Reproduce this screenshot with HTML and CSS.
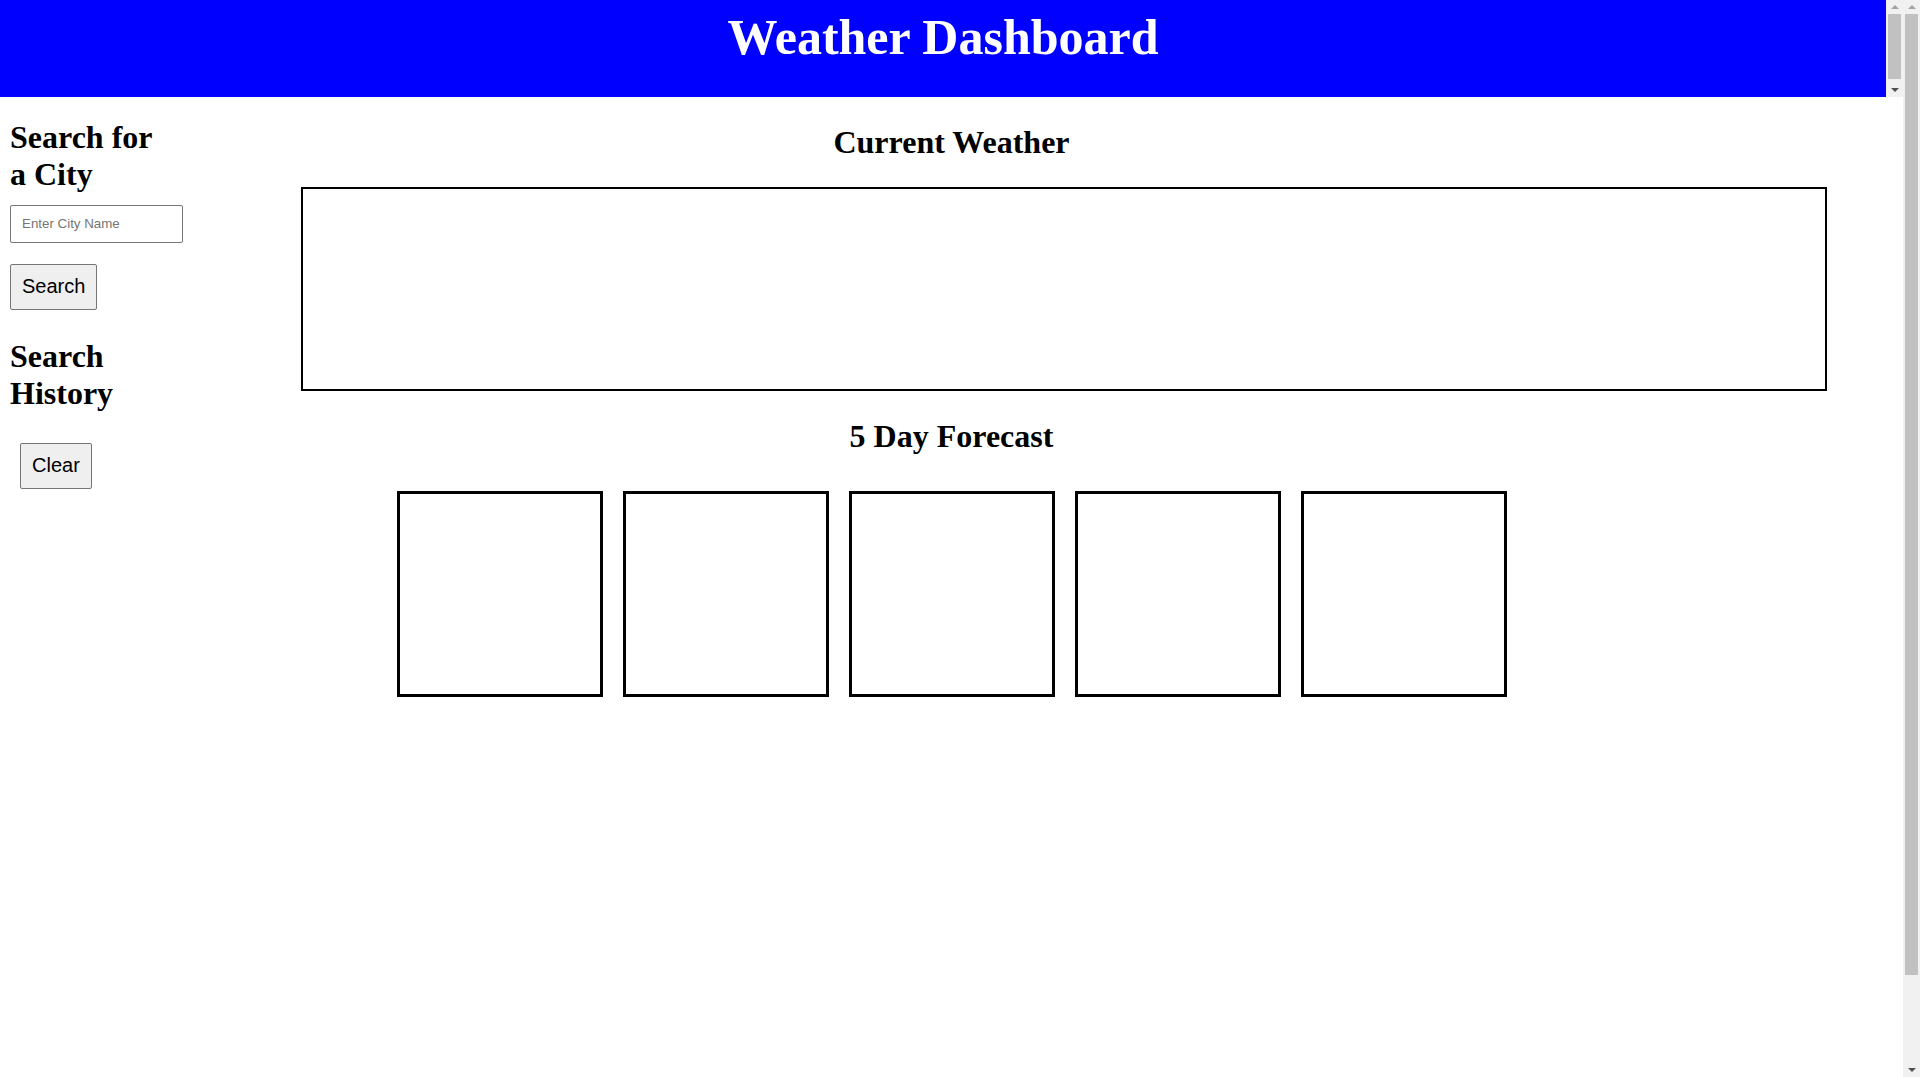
FILE: index.html
```html
<!DOCTYPE html>
<html lang="en">
<head>
<meta charset="utf-8">
<title>Weather Dashboard</title>
<link rel="stylesheet" href="styles.css">
</head>
<body>
<header class="site-header">
  <h1 class="site-title">Weather Dashboard</h1>
  <div class="scrollbar scrollbar-header" aria-hidden="true">
    <span class="sb-btn"><svg width="8" height="4" viewBox="0 0 8 4"><polygon points="0,4 4,0 8,4" fill="#a3a3a3"/></svg></span>
    <span class="sb-track"><span class="sb-thumb sb-thumb-header"></span></span>
    <span class="sb-btn"><svg width="8" height="4" viewBox="0 0 8 4"><polygon points="0,0 8,0 4,4" fill="#505050"/></svg></span>
  </div>
</header>
<div class="layout">
  <main class="main">
    <h2 class="section-title">Current Weather</h2>
    <div class="current"></div>
    <h2 class="section-title">5 Day Forecast</h2>
    <div class="forecast">
      <div class="card"></div>
      <div class="card"></div>
      <div class="card"></div>
      <div class="card"></div>
      <div class="card"></div>
    </div>
  </main>
  <aside class="sidebar">
    <h2 class="side-title side-title-first">Search for a City</h2>
    <input class="city-input" type="text" placeholder="Enter City Name">
    <button class="btn btn-search" type="button">Search</button>
    <h2 class="side-title side-title-history">Search History</h2>
    <div class="history">
      <button class="btn btn-clear" type="button">Clear</button>
    </div>
  </aside>
</div>
<div class="scrollbar scrollbar-page" aria-hidden="true">
  <span class="sb-btn"><svg width="8" height="4" viewBox="0 0 8 4"><polygon points="0,4 4,0 8,4" fill="#a3a3a3"/></svg></span>
  <span class="sb-track"><span class="sb-thumb sb-thumb-page"></span></span>
  <span class="sb-btn"><svg width="8" height="4" viewBox="0 0 8 4"><polygon points="0,0 8,0 4,4" fill="#505050"/></svg></span>
</div>
</body>
</html>
```
FILE: styles.css
```css
html, body {
  margin: 0;
  padding: 0;
}

body {
  padding-right: 17px;
  font-family: "Liberation Serif", "Times New Roman", serif;
  color: #000;
  background: #fff;
}

/* header */
.site-header {
  display: flex;
  height: 97px;
  background: #0000ff;
}

.site-title {
  flex: 1;
  margin: 0;
  padding-top: 7.5px;
  font-family: "Liberation Serif", "Times New Roman", serif;
  font-weight: bold;
  font-size: 50px;
  text-align: center;
  color: #fff;
}

/* classic scrollbars as seen in the screenshot */
.scrollbar {
  display: flex;
  flex-direction: column;
  width: 17px;
  background: #f1f1f1;
}

.scrollbar-page {
  position: fixed;
  top: 0;
  right: 0;
  height: 100vh;
}

.sb-btn {
  display: flex;
  align-items: center;
  justify-content: center;
  height: 14px;
  flex: none;
}

.sb-btn svg {
  display: block;
}

.sb-track {
  flex: 1;
  display: flex;
  flex-direction: column;
}

.sb-thumb {
  display: block;
  margin: 0 2px;
  background: #c1c1c1;
}

.sb-thumb-header {
  height: 65px;
}

.sb-thumb-page {
  height: 961px;
}

/* main layout */
.layout {
  display: grid;
  grid-template-columns: 1fr;
  min-height: 100vh;
}

.layout > .main,
.layout > .sidebar {
  grid-area: 1 / 1;
}

.sidebar {
  justify-self: start;
  align-self: start;
  width: 160px;
  padding-left: 10px;
}

.side-title {
  font-family: "Liberation Serif", "Times New Roman", serif;
  font-weight: bold;
  font-size: 32px;
  margin: 0;
}

.side-title-first {
  margin-top: 22px;
  margin-bottom: 11.5px;
}

.side-title-history {
  margin-top: 28px;
  margin-bottom: 31px;
}

.city-input {
  display: block;
  box-sizing: border-box;
  width: 173px;
  height: 38px;
  padding: 10px 11px;
  border: 1px solid #767676;
  border-radius: 2px;
  font-family: "Liberation Sans", Arial, sans-serif;
  font-size: 13.333px;
  color: #000;
  background: #fff;
}

.city-input::placeholder {
  color: #757575;
}

.btn {
  display: block;
  box-sizing: border-box;
  height: 46px;
  padding: 0 11px;
  border: 1px solid #767676;
  border-radius: 2px;
  background: #efefef;
  color: #000;
  font-family: "Liberation Sans", Arial, sans-serif;
  font-size: 20px;
  line-height: 23px;
}

.btn-search {
  margin-top: 21px;
}

.history {
  padding-left: 10px;
}

.main {
  min-width: 0;
}

.section-title {
  font-family: "Liberation Serif", "Times New Roman", serif;
  font-weight: bold;
  font-size: 32px;
  margin: 26.56px 0;
  text-align: center;
}

.current {
  width: 80%;
  height: 200px;
  border: 2px solid #000;
  margin: 0 4% 0 auto;
}

.forecast {
  display: flex;
  justify-content: center;
}

.card {
  width: 200px;
  height: 200px;
  border: 3px solid #000;
  margin: 10px;
}
```
